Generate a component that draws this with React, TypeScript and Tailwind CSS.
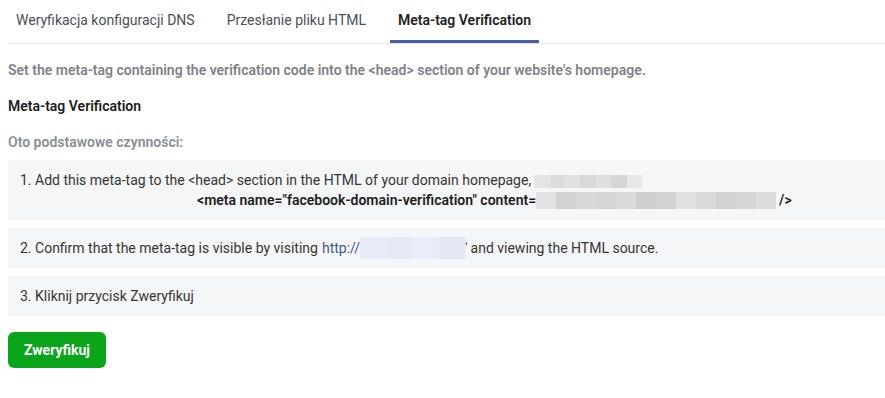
import React from 'react'

const TABS = ['Weryfikacja konfiguracji DNS', 'Przesłanie pliku HTML', 'Meta-tag Verification']

// pixelated "redacted" strip, like the blurred bits in the screenshot
function Redacted({ shades, h, w }: { shades: string[]; h: string; w: string }) {
  return (
    <span className={`inline-flex align-middle ${h} ${w}`}>
      {shades.map((c, i) => (
        <span key={i} className="flex-1 h-full" style={{ backgroundColor: c }} />
      ))}
    </span>
  )
}

export default function App() {
  const active = 2
  return (
    <div className="w-full min-h-screen bg-white text-[14px] leading-5 text-[#1c1e21]" style={{ fontFamily: 'Roboto, "Liberation Sans", sans-serif' }}>
      <div className="ml-2 flex border-b border-[#e4e6eb]">
        {TABS.map((t, i) => (
          <div
            key={t}
            className={`h-[43px] flex items-center px-2 border-b-[3px] mr-4 ${
              i === active ? 'border-[#4b5ea8] font-semibold text-[#1c1e21]' : 'border-transparent text-[#4b4f56]'
            }`}
          >
            {t}
          </div>
        ))}
      </div>

      <div className="pl-2">
        <p className="mt-4 font-semibold text-[#7f8287]">
          Set the meta-tag containing the verification code into the &lt;head&gt; section of your website's homepage.
        </p>
        <p className="mt-4 font-semibold text-[#1c1e21]">Meta-tag Verification</p>
        <p className="mt-4 font-semibold text-[#8a8f96]">Oto podstawowe czynności:</p>

        <div className="mt-2 flex flex-col gap-2">
          <div className="bg-[#f5f6f7] py-[10px] px-3 text-[#353535]">
            <div className="flex items-center">
              <span>1. Add this meta-tag to the &lt;head&gt; section in the HTML of your domain homepage,</span>
              <span className="ml-[3px]">
                <Redacted h="h-[13px]" w="w-[108px]" shades={['#e4e4e5', '#dcdcdd', '#e1e1e2', '#d9d9da', '#dfdfe0', '#d6d6d7', '#e8e8e9']} />
              </span>
            </div>
            <div className="flex items-center pl-[177px] font-semibold text-[#1c1e21]">
              <span>&lt;meta name="facebook-domain-verification" content=</span>
              <Redacted
                h="h-[17px]"
                w="w-[240px]"
                shades={['#e2e2e3', '#d2d2d3', '#d8d8d9', '#d5d5d6', '#dadadb', '#cfcfd0', '#d4d4d5', '#e0e0e1', '#d9d9da', '#d2d2d3', '#d6d6d7', '#dcdcdd']}
              />
              <span className="ml-[3px]">/&gt;</span>
            </div>
          </div>

          <div className="bg-[#f5f6f7] h-10 px-3 text-[#353535] flex items-center">
            <span>2. Confirm that the meta-tag is visible by visiting</span>
            <span className="ml-1 text-[#385898]">http://</span>
            <Redacted h="h-[22px]" w="w-[105px]" shades={['#e9ecf7', '#e6e9f5', '#eaedf8', '#e5e8f4']} />
            <span className="text-[#385898]">'</span>
            <span className="ml-[3px]">and viewing the HTML source.</span>
          </div>

          <div className="bg-[#f5f6f7] h-10 px-3 text-[#353535] flex items-center">3. Kliknij przycisk Zweryfikuj</div>
        </div>

        <button className="mt-4 h-[36px] w-[98px] rounded-md bg-[#0aa51b] text-white font-bold text-[14px]">
          Zweryfikuj
        </button>
      </div>
    </div>
  )
}
